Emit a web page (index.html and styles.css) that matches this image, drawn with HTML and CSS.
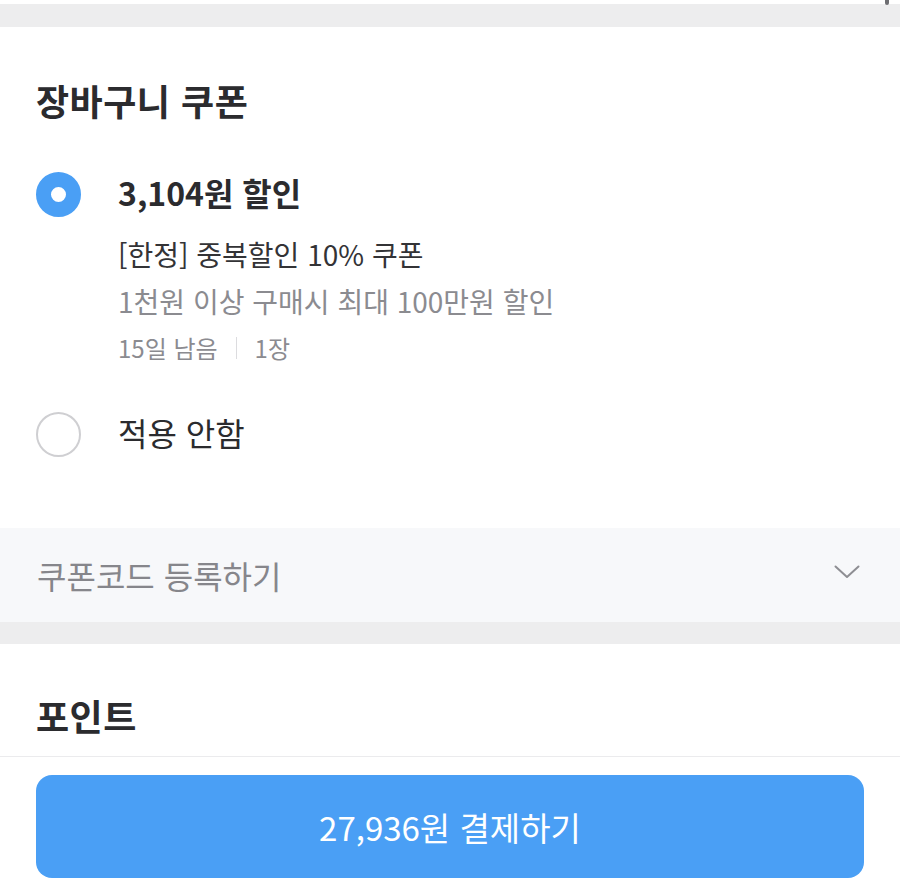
FILE: index.html
```html
<!DOCTYPE html>
<html lang="ko">
<head>
<meta charset="UTF-8">
<title>장바구니 쿠폰</title>
<link rel="stylesheet" href="styles.css">
</head>
<body>
    <div class="scroll-mark"></div>
    <div class="gap-band top"></div>

    <div class="section coupons">
        <h2 class="section-title">장바구니 쿠폰</h2>

        <div class="option">
            <span class="radio checked"></span>
            <div class="option-body">
                <div class="option-title strong">3,104원 할인</div>
                <div class="coupon-name">[한정] 중복할인 10% 쿠폰</div>
                <div class="coupon-desc">1천원 이상 구매시 최대 100만원 할인</div>
                <div class="coupon-meta">
                    <span>15일 남음</span>
                    <span class="bar"></span>
                    <span>1장</span>
                </div>
            </div>
        </div>

        <div class="option none">
            <span class="radio"></span>
            <div class="option-body">
                <div class="option-title">적용 안함</div>
            </div>
        </div>
    </div>

    <div class="code-row">
        <span>쿠폰코드 등록하기</span>
        <svg class="chevron" width="26" height="14" viewBox="0 0 26 14">
            <path d="M1.5 1.5 L13 12 L24.5 1.5" fill="none" stroke="#8e8e93" stroke-width="2" stroke-linecap="round" stroke-linejoin="round"/>
        </svg>
    </div>

    <div class="gap-band"></div>

    <div class="section points">
        <h2 class="section-title">포인트</h2>
    </div>

    <div class="footer">
        <button type="button" class="pay-btn">27,936원 결제하기</button>
    </div>
</body>
</html>
```

FILE: styles.css
```css
body {
    margin: 0;
    padding: 0;
    background: #fff;
    color: #2b2b2e;
    font-family: "Noto Sans CJK KR", "Noto Sans", sans-serif;
}
.scroll-mark {
    position: absolute;
    top: 0;
    right: 11px;
    width: 4px;
    height: 5px;
    border-radius: 0 0 2px 2px;
    background: #6e6e72;
}
.gap-band {
    height: 22px;
    background: #ededee;
}
.gap-band.top {
    height: 23px;
    margin-top: 4px;
}
.section {
    padding: 0 36px;
}
.section-title {
    margin: 0;
    font-size: 36px;
    line-height: 44px;
    font-weight: 700;
    letter-spacing: 0.5px;
}
.coupons {
    padding-top: 51px;
    padding-bottom: 71px;
}
.option {
    display: flex;
    align-items: flex-start;
    margin-top: 50px;
}
.option.none {
    margin-top: 44px;
}
.radio {
    flex: none;
    width: 45px;
    height: 45px;
    box-sizing: border-box;
    border-radius: 50%;
    border: 2px solid #cfcfd2;
    background: #fff;
}
.radio.checked {
    border: 15px solid #4a9ff5;
}
.option-body {
    margin-left: 37px;
    display: flex;
    flex-direction: column;
}
.option-title {
    font-size: 32px;
    line-height: 44px;
    margin-top: -2px;
}
.option-title.strong {
    font-weight: 700;
}
.coupon-name {
    margin-top: 17px;
    font-size: 28px;
    line-height: 47px;
    color: #333336;
}
.coupon-desc {
    font-size: 28px;
    line-height: 47px;
    color: #8b8b90;
}
.coupon-meta {
    margin-top: 3px;
    display: flex;
    align-items: center;
    gap: 18px;
    font-size: 24px;
    line-height: 40px;
    color: #8b8b90;
}
.coupon-meta .bar {
    width: 1px;
    height: 22px;
    background: #dcdcdf;
}
.code-row {
    height: 94px;
    padding: 0 40px 0 37px;
    background: #f7f8fa;
    display: flex;
    align-items: center;
    justify-content: space-between;
    font-size: 32px;
    color: #86868b;
}
.chevron {
    margin-top: -6px;
}
.points {
    padding-top: 49px;
    padding-bottom: 19px;
}
.footer {
    border-top: 1px solid #ebebed;
    padding: 18px 36px 2px;
}
.pay-btn {
    display: block;
    width: 100%;
    height: 103px;
    border: none;
    border-radius: 16px;
    background: #4a9ff5;
    color: #fff;
    font-family: inherit;
    font-size: 33px;
    cursor: pointer;
}
```
